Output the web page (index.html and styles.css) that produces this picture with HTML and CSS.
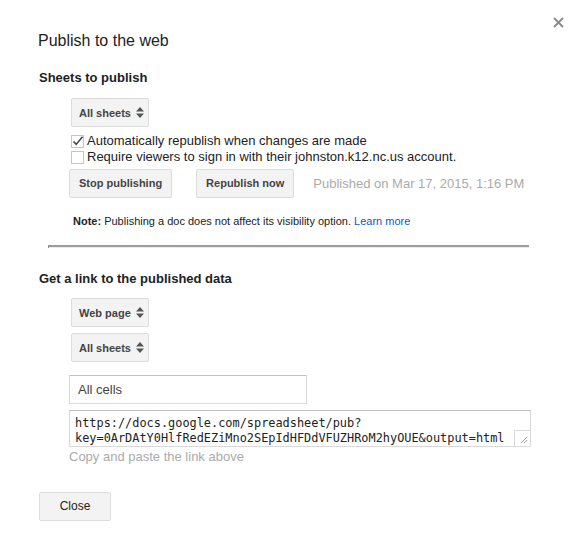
FILE: index.html
```html
<!DOCTYPE html>
<html>
<head>
<meta charset="utf-8">
<link rel="stylesheet" href="styles.css">
</head>
<body>
<div class="dialog">
  <span class="close-x" aria-label="Close">
    <svg width="11" height="11" viewBox="0 0 11 11"><path d="M1 1L10 10M10 1L1 10" stroke="#8c8c8c" stroke-width="2"/></svg>
  </span>
  <h1 class="title">Publish to the web</h1>

  <h2 class="section-title">Sheets to publish</h2>
  <div class="indent">
    <div class="select">All sheets <span class="arrows"><svg width="8" height="11" viewBox="0 0 8 11"><path d="M4 0L8 4.5H0Z M4 11L8 6.5H0Z" fill="#555"/></svg></span></div>
    <div class="checks">
      <label class="check-row"><span class="box"><svg width="13" height="13" viewBox="0 0 13 13"><path d="M2.5 6.5L5.2 9.4L11.5 1.8" fill="none" stroke="#444" stroke-width="1.6"/></svg></span>Automatically republish when changes are made</label>
      <label class="check-row"><span class="box"></span>Require viewers to sign in with their johnston.k12.nc.us account.</label>
    </div>
    <div class="actions">
      <button class="btn">Stop publishing</button>
      <button class="btn">Republish now</button>
      <span class="published">Published on Mar 17, 2015, 1:16 PM</span>
    </div>
    <p class="note"><b>Note:</b> Publishing a doc does not affect its visibility option. <a href="#">Learn more</a></p>
  </div>

  <hr class="sep">

  <h2 class="section-title second">Get a link to the published data</h2>
  <div class="indent tight">
    <div class="select">Web page <span class="arrows"><svg width="8" height="11" viewBox="0 0 8 11"><path d="M4 0L8 4.5H0Z M4 11L8 6.5H0Z" fill="#555"/></svg></span></div>
    <div class="select gap">All sheets <span class="arrows"><svg width="8" height="11" viewBox="0 0 8 11"><path d="M4 0L8 4.5H0Z M4 11L8 6.5H0Z" fill="#555"/></svg></span></div>
    <div class="input">All cells</div>
    <div class="link-wrap">
      <textarea class="link" readonly>https://docs.google.com/spreadsheet/pub?key=0ArDAtY0HlfRedEZiMno2SEpIdHFDdVFUZHRoM2hyOUE&amp;output=html</textarea>
      <span class="grip"><svg width="8" height="8" viewBox="0 0 8 8"><path d="M7 1L1 7M7 4L4 7" stroke="#888" stroke-width="0.8"/></svg></span>
    </div>
    <div class="hint">Copy and paste the link above</div>
  </div>

  <button class="btn close-btn">Close</button>
</div>
</body>
</html>
```
FILE: styles.css
```css
* { box-sizing: border-box; }
html, body { margin: 0; padding: 0; background: #fff; }
body {
  font-family: "Liberation Sans", Arial, sans-serif;
  color: #222;
  font-size: 13px;
}
.dialog {
  position: relative;
  width: 580px;
  height: 542px;
  padding: 31px 0 0 38px;
}
.close-x {
  position: absolute;
  top: 17px;
  left: 553px;
  width: 11px;
  height: 11px;
  display: block;
}
.close-x svg { display: block; }
.title {
  margin: 0;
  font-size: 16px;
  line-height: 20px;
  font-weight: normal;
  color: #222;
}
.section-title {
  margin: 19px 0 0 1px;
  font-size: 13px;
  line-height: 16px;
  font-weight: bold;
  color: #222;
}
.section-title.second { margin-top: 23px; }
.indent {
  margin-left: 31px;
  padding-top: 12px;
}
.indent.tight { padding-top: 11px; }
.select {
  display: flex;
  align-items: center;
  width: 78px;
  height: 29px;
  margin-left: 2px;
  padding: 0 0 0 7px;
  border: 1px solid #dcdcdc;
  border-radius: 2px;
  background: #f3f3f3;
  font-size: 11px;
  font-weight: bold;
  color: #444;
  white-space: nowrap;
  gap: 5px;
}
.select.gap { margin-top: 6px; }
.arrows svg { display: block; }
.checks { margin-top: 6px; }
.check-row {
  display: flex;
  align-items: center;
  height: 16px;
  line-height: 16px;
  font-size: 13px;
  color: #222;
  margin-left: 2px;
}
.box {
  width: 13px;
  height: 13px;
  border: 1px solid #c6c6c6;
  background: #fff;
  margin-right: 3px;
  position: relative;
  flex: none;
}
.box svg { position: absolute; left: -1px; top: -1px; }
.actions {
  display: flex;
  align-items: center;
  margin-top: 4px;
}
.btn {
  height: 29px;
  padding: 0 9px;
  border: 1px solid #dcdcdc;
  border-radius: 2px;
  background: #f3f3f3;
  font-family: "Liberation Sans", Arial, sans-serif;
  font-size: 11px;
  font-weight: bold;
  color: #444;
  line-height: 27px;
}
.actions .btn + .btn { margin-left: 24px; }
.published {
  margin-left: 19px;
  color: #aaa;
  font-size: 13px;
}
.note {
  margin: 16px 0 0 4px;
  font-size: 11px;
  line-height: 14px;
  color: #222;
}
.note a { color: #15c; text-decoration: none; }
.sep {
  margin: 17px 0 0 10px;
  width: 481px;
  height: 3px;
  border: 0;
  border-top: 2px solid #9d9d9d;
  border-left: 1px solid #8a8a8a;
  background: #ececec;
}
.input {
  margin-top: 13px;
  width: 238px;
  height: 29px;
  padding: 0 8px;
  border: 1px solid #d9d9d9;
  border-top-color: #c0c0c0;
  font-size: 13px;
  line-height: 27px;
  color: #444;
}
.link-wrap {
  position: relative;
  margin-top: 6px;
  width: 462px;
}
.link {
  display: block;
  width: 462px;
  height: 37px;
  margin: 0;
  padding: 5px 5px 0;
  border: 1px solid #d9d9d9;
  border-top-color: #c0c0c0;
  font-family: "DejaVu Sans Mono", monospace;
  font-size: 11.9px;
  line-height: 15px;
  color: #222;
  resize: none;
  overflow: hidden;
  outline: none;
}
.grip {
  position: absolute;
  right: 1px;
  bottom: 1px;
  width: 16px;
  height: 16px;
  border-left: 1px solid #d9d9d9;
  border-top: 1px solid #d9d9d9;
  background: #fff;
  display: flex;
  align-items: flex-end;
  justify-content: flex-end;
  padding: 0 2px 2px 0;
}
.grip svg { display: block; }
.hint {
  margin-top: 2px;
  font-size: 13px;
  line-height: 16px;
  color: #aaa;
}
.close-btn {
  display: block;
  margin-top: 27px;
  margin-left: 1px;
  width: 72px;
  font-weight: normal;
  font-size: 12px;
  color: #222;
}
```
